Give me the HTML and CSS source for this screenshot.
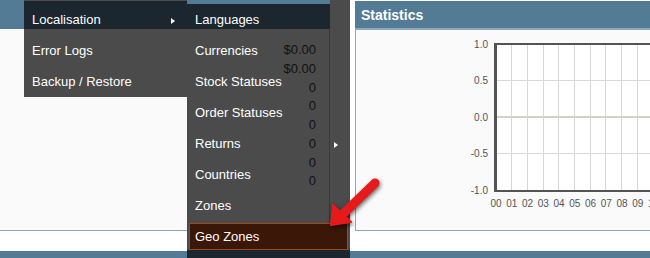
FILE: index.html
```html
<!DOCTYPE html>
<html>
<head>
    <link rel="stylesheet" href="styles.css">
</head>
<body>
<div class="page">
    <div class="dashboard">
        <div class="box box-overview">
            <div class="box-heading"></div>
            <div class="box-content"></div>
        </div>
        <div class="box box-statistics">
            <div class="box-heading">Statistics</div>
            <div class="box-content">
                <svg class="chart" width="320" height="200" viewBox="0 0 320 200">
                    <rect class="plot-bg" x="141" y="15" width="179" height="145"/>
                    <g class="grid">
                        <rect x="155" y="15" width="1" height="145"/>
                        <rect x="171" y="15" width="1" height="145"/>
                        <rect x="187" y="15" width="1" height="145"/>
                        <rect x="202" y="15" width="1" height="145"/>
                        <rect x="218" y="15" width="1" height="145"/>
                        <rect x="234" y="15" width="1" height="145"/>
                        <rect x="249" y="15" width="1" height="145"/>
                        <rect x="265" y="15" width="1" height="145"/>
                        <rect x="281" y="15" width="1" height="145"/>
                        <rect x="297" y="15" width="1" height="145"/>
                        <rect x="141" y="50" width="179" height="1"/>
                        <rect x="141" y="123" width="179" height="1"/>
                    </g>
                    <rect class="zero" x="141" y="86" width="179" height="2"/>
                    <g class="axis">
                        <rect x="138" y="13" width="182" height="2"/>
                        <rect x="138" y="160" width="182" height="2"/>
                        <rect x="138" y="13" width="3" height="149"/>
                    </g>
                    <g class="ticks-y">
                        <text x="132" y="17.6">1.0</text>
                        <text x="132" y="54.1">0.5</text>
                        <text x="132" y="90.6">0.0</text>
                        <text x="132" y="127.1">-0.5</text>
                        <text x="132" y="164">-1.0</text>
                    </g>
                    <g class="ticks-x">
                        <text x="140" y="177">00</text>
                        <text x="155.75" y="177">01</text>
                        <text x="171.5" y="177">02</text>
                        <text x="187.25" y="177">03</text>
                        <text x="203" y="177">04</text>
                        <text x="218.75" y="177">05</text>
                        <text x="234.5" y="177">06</text>
                        <text x="250.25" y="177">07</text>
                        <text x="266" y="177">08</text>
                        <text x="281.75" y="177">09</text>
                        <text x="297.5" y="177">10</text>
                    </g>
                </svg>
            </div>
        </div>
    </div>
    <div class="footer-bar"></div>

    <ul class="menu menu-system">
        <li class="open"><a href="#"><span>Localisation</span><i class="caret"></i></a></li>
        <li><a href="#"><span>Error Logs</span></a></li>
        <li><a href="#"><span>Backup / Restore</span></a></li>
    </ul>

    <div class="submenu">
        <ul class="menu">
            <li class="open"><a href="#"><span>Languages</span></a></li>
            <li><a href="#"><span>Currencies</span></a></li>
            <li><a href="#"><span>Stock Statuses</span></a></li>
            <li><a href="#"><span>Order Statuses</span></a></li>
            <li><a href="#"><span>Returns</span><i class="caret"></i></a></li>
            <li><a href="#"><span>Countries</span></a></li>
            <li><a href="#"><span>Zones</span></a></li>
            <li class="current"><a href="#"><span>Geo Zones</span></a></li>
        </ul>
        <div class="totals">
            <div>$0.00</div>
            <div>$0.00</div>
            <div>0</div>
            <div>0</div>
            <div>0</div>
            <div>0</div>
            <div>0</div>
            <div>0</div>
        </div>
    </div>

    <svg class="pointer" width="66" height="62" viewBox="0 0 66 62">
        <line x1="21" y1="42" x2="53" y2="11" stroke="#e61a1a" stroke-width="9" stroke-linecap="round"/>
        <polygon points="9,53 11,33 29,50" fill="#e61a1a" stroke="#e61a1a" stroke-width="2" stroke-linejoin="round"/>
    </svg>
</div>
</body>
</html>
```

FILE: styles.css
```css
body {
    margin: 0;
    background: #fff;
    font-family: "Liberation Sans", Arial, sans-serif;
}

.page {
    position: relative;
    width: 650px;
    height: 258px;
    overflow: hidden;
}

.dashboard {
    display: flex;
    align-items: flex-start;
    gap: 5px;
    width: 700px;
    margin-bottom: 20px;
}

.box-heading {
    background-color: #537b96;
}

.box-overview {
    width: 350px;
}

.box-overview .box-heading {
    height: 29px;
}

.box-overview .box-content {
    height: 201px;
    background-color: #fafafa;
    border-bottom: 1px solid #8aa9bf;
}

.box-statistics {
    width: 320px;
    margin-top: 1px;
}

.box-statistics .box-heading {
    height: 26px;
    padding: 1px 6px 0;
    border-bottom: 2px solid #8aa9bf;
    color: #fff;
    font-size: 14px;
    font-weight: bold;
    line-height: 26px;
}

.box-statistics .box-content {
    height: 200px;
    background-color: #fafafa;
    border-left: 1px solid #8aa9bf;
    border-bottom: 1px solid #8aa9bf;
}

.footer-bar {
    height: 10px;
    background-color: #537b96;
}

.chart {
    display: block;
}

.chart .plot-bg {
    fill: #fff;
}

.chart .grid rect {
    fill: #d8d8d8;
}

.chart .zero {
    fill: #cdd6c5;
}

.chart .axis rect {
    fill: #545454;
}

.chart text {
    font-family: "Liberation Sans", Arial, sans-serif;
    font-size: 10px;
    fill: #545454;
}

.chart .ticks-y text {
    text-anchor: end;
}

.chart .ticks-x text {
    text-anchor: middle;
}

/* dropdown menus */
.menu {
    margin: 0;
    padding: 0;
    list-style: none;
}

.menu a {
    display: flex;
    justify-content: space-between;
    align-items: baseline;
    box-sizing: border-box;
    height: 31px;
    padding: 14px 12px 0 8px;
    color: #fff;
    font-size: 13px;
    line-height: 15px;
    text-decoration: none;
}

.caret {
    width: 0;
    height: 0;
    margin-bottom: 1px;
    border-left: 4px solid #fff;
    border-top: 3px solid transparent;
    border-bottom: 3px solid transparent;
}

.menu-system {
    position: absolute;
    left: 24px;
    top: 0;
    width: 163px;
    padding: 1px 0 6px;
    background-color: #4b4b4b;
}

.menu-system .open a {
    height: 28px;
    padding-top: 11px;
    background-color: #1b262e;
}

.submenu {
    position: absolute;
    left: 187px;
    top: 0;
    width: 163px;
    padding-top: 4px;
    background:
        linear-gradient(to right, transparent 143px, #4b4b4b 143px) 0 0 / 100% 4px no-repeat,
        linear-gradient(to right, #4b4b4b 142px, #383838 142px, #383838 143px, #4b4b4b 143px) 0 4px / 100% 100% no-repeat;
}

.submenu::after {
    content: "";
    display: block;
    height: 8px;
    background-color: #1b262e;
}

.submenu .open a {
    height: 25px;
    padding-top: 8px;
    margin-right: 20px;
    background-color: #1b262e;
}

.submenu .current {
    margin: 8px 2px 0;
}

.submenu .current a {
    height: 27px;
    padding: 5px 5px 0;
    border: 1px solid #9b4a1e;
    background-color: #3b1708;
}

.totals {
    position: absolute;
    top: 41px;
    right: 34px;
    color: #111;
    font-size: 13px;
    line-height: 18.75px;
    text-align: right;
}

.pointer {
    position: absolute;
    left: 322px;
    top: 172px;
    filter: drop-shadow(1px 2px 2px rgba(0, 0, 0, 0.6));
}
```
